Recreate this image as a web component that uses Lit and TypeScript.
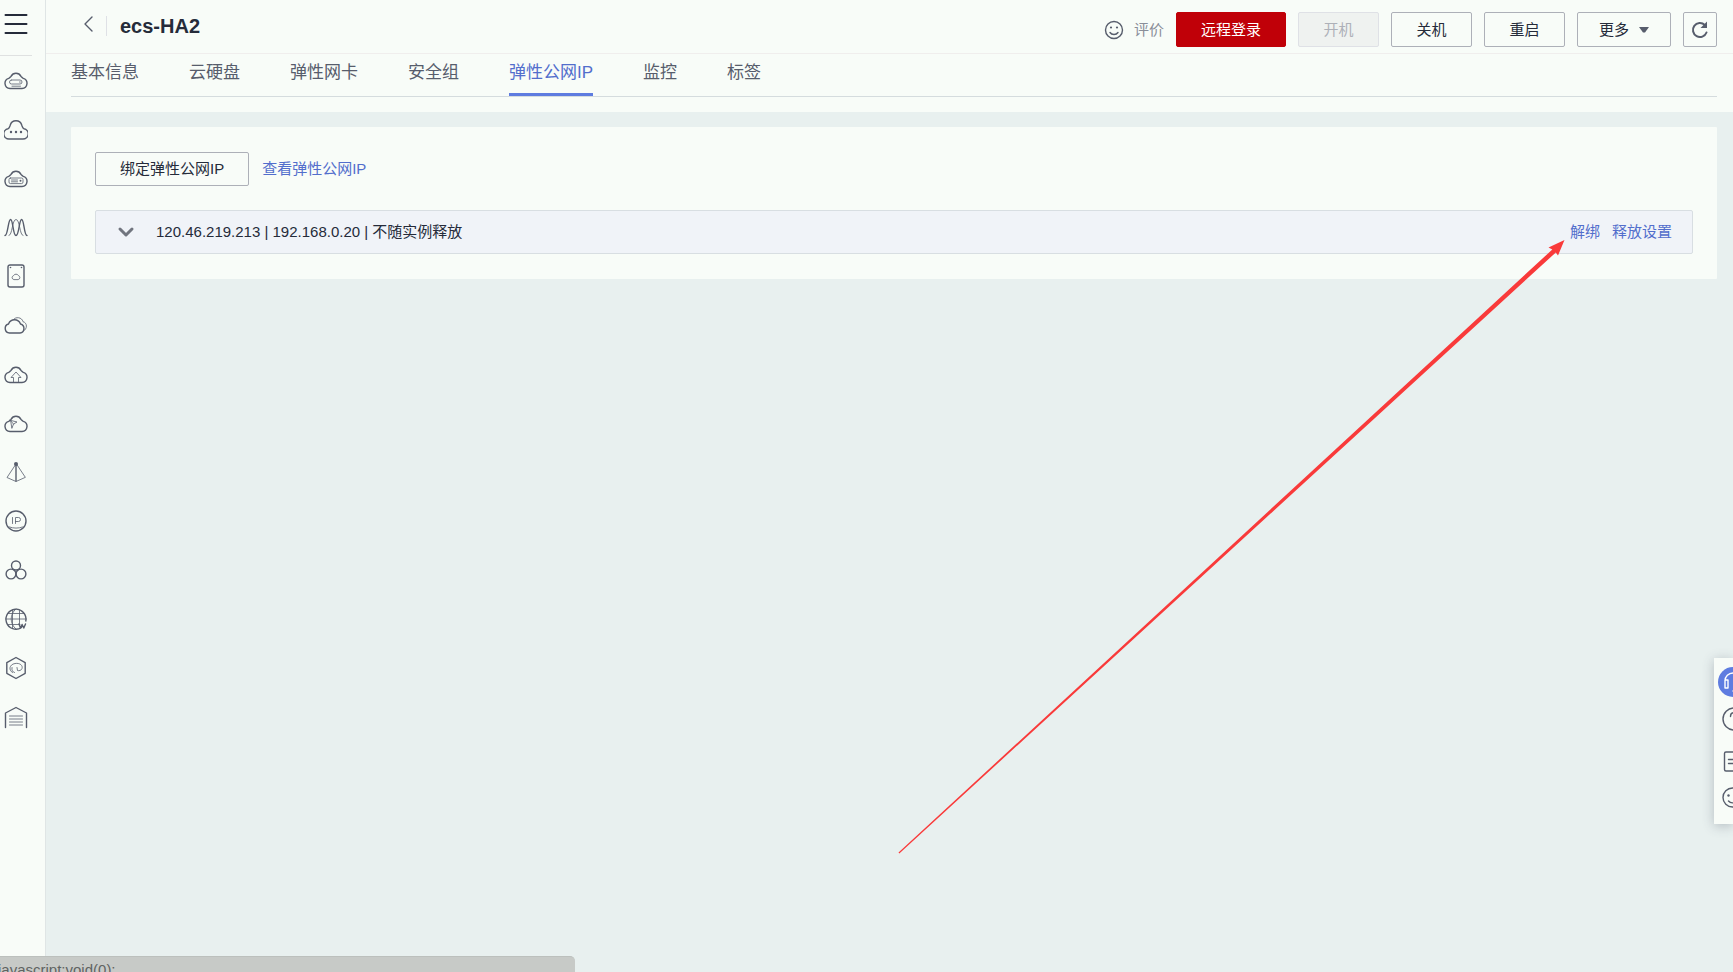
import { LitElement, html, css, svg } from "lit";
import { customElement, state } from "lit/decorators.js";

const cloud = "M6 20.5a5.2 5.2 0 0 1-1.2-10.2C5.8 9.6 6.500 9.300 7 8.400a5.600 5.600 0 0 1 10 0c.5.9 1.200 1.200 2.200 1.900A5.200 5.200 0 0 1 18 20.500z";

const services = [
  { name: "弹性云服务器", art: svg`<path d=${cloud}/><path class="thin" d="M7.500 12h8.500a1.500 1.500 0 0 1 0 4h-8.500a1.500 1.500 0 0 1 0-4M8 18.200h8.500M15.500 14h.8"/>` },
  { name: "云容器引擎", art: svg`<path d="M5 22a5.200 5.200 0 0 1-1-10.300C5.500 11.300 5.500 9.800 6.200 8.200a6 6 0 0 1 11.600 0c.7 1.600.7 3.100 2.200 3.500A5.200 5.200 0 0 1 19 22z"/><g class="dot"><circle cx="7" cy="15" r="1.200"/><circle cx="12" cy="15" r="1.200"/><circle cx="17" cy="15" r="1.200"/></g>` },
  { name: "裸金属服务器", art: svg`<path d=${cloud}/><rect class="thin" x="5" y="12" width="14" height="5.600" rx="1.500"/><path class="thin" d="M7.500 14h6M7.500 15.800h6"/><circle class="dot" cx="16.500" cy="14.800" r="1"/>` },
  { name: "弹性伸缩", art: svg`<path d="M1 20.500c3 0 3-16 5.600-16s2.200 16 5.400 16 3-16 5.600-16 2.400 16 5.400 16"/><path class="thin" d="M5 20.500c3.500 0 3-16 7-16s3.500 16 7 16"/>` },
  { name: "专属主机", art: svg`<rect x="4" y="1" width="16" height="22" rx="2"/><path class="thin" d="M9.500 15.500a2 2 0 0 1 0-3.800 2.800 2.800 0 0 1 5 0 2 2 0 0 1 0 3.800z"/><circle class="dot" cx="6.500" cy="3.500" r=".8"/><circle class="dot" cx="17.500" cy="3.500" r=".8"/>` },
  { name: "镜像服务", art: svg`<path d="M5.500 20a4.600 4.600 0 0 1-1-9C5.500 8.500 7.500 6.800 10.500 6.800s5 1.700 6 4.200a4.600 4.600 0 0 1-.5 9z"/><path class="thin" d="M9.500 6.500c2-3 8.500-2.500 9.500 2.200 4.500 1 4.500 7.500.5 9.200"/>` },
  { name: "云备份", art: svg`<path d=${cloud}/><path class="thin" d="M9.500 20v-4.500H7L12 10l5 5.500h-2.500V20"/>` },
  { name: "云服务", art: svg`<path d=${cloud}/><path class="thin" d="M7 9.500l6 1.500-3.500 2-1.500 4zM9.500 13L6 9"/>` },
  { name: "弹性负载均衡", art: svg`<circle class="dot" cx="12" cy="4" r="2"/><path d="M12 4v17"/><path class="thin" d="M12 4L3 17.500l9 4 9-4z"/>` },
  { name: "弹性公网IP", art: svg`<circle cx="12" cy="12" r="10"/><path class="thin" d="M8.500 8.500v6M11.500 14.500v-6h3a2 2 0 0 1 0 4h-3M5.500 18c4 1.500 9 1.500 13 0"/>` },
  { name: "虚拟私有云", art: svg`<circle cx="12" cy="7.500" r="4.500"/><circle cx="7" cy="16" r="4.900"/><circle cx="17" cy="16" r="4.900"/>` },
  { name: "内容分发网络", art: svg`<path d="M17.500 20.500A10 10 0 1 1 21.800 14"/><path class="thin" d="M2 12h20M4 6.500h16M4 17.500h12M8.500 3v18M15.500 3v14M12 2C5.500 7 5.500 17 12 22"/><path d="M15 17l1.500 4 1.600-3.500L19.800 21 21.500 17"/>` },
  { name: "云专线", art: svg`<path d="M12 1.500l9.200 5.200v10.600L12 22.500l-9.200-5.200V6.700z"/><path class="thin" d="M8.500 16.500c-4-2-3.500-8 2.500-9 5-.8 8 2 7 5-.6 2-3 2.500-4.500 2l-.5-3M8 11.500c-.5 3 .5 4.500 2.500 5"/>` },
  { name: "仓库", art: svg`<path d="M1.500 22.500V8L12 2.500 22.500 8v14.500"/><path class="thin" d="M5.500 11h13M5.500 14h13M5.500 17h13M5.500 20h13"/>` },
];

const tabs = ["基本信息", "云硬盘", "弹性网卡", "安全组", "弹性公网IP", "监控", "标签"];

@customElement("app-root")
export class AppRoot extends LitElement {
  @state() private active = 4;

  static styles = css`
    :host {
      display: block;
      min-height: 100vh;
      background: #e8f0ef;
      color: #252b3a;
      font: 15px/20px "Liberation Sans", "Noto Sans CJK SC", sans-serif;
    }
    * { box-sizing: border-box; }
    svg {
      display: block;
      fill: none;
      stroke: #575d6c;
      stroke-width: 1.4;
      stroke-linecap: round;
      stroke-linejoin: round;
    }
    .thin { stroke-width: 0.8; }
    .dot { fill: #575d6c; stroke: none; }
    a { color: #526ecc; text-decoration: none; }
    button {
      display: flex;
      align-items: center;
      justify-content: center;
      padding: 0;
      border: 0;
      background: none;
      color: inherit;
      font: inherit;
      white-space: nowrap;
    }
    .shell { display: flex; min-height: 100vh; }
    .side {
      flex: none;
      width: 46px;
      background: #f8fcf8;
      border-right: 1px solid #dfe5e5;
    }
    .burger { width: 32px; height: 56px; padding: 0 0 8px; border-bottom: 1px solid #dfe1e1; }
    .burger svg { stroke: #252b3a; stroke-width: 2; }
    .services { list-style: none; margin: 0; padding: 0; }
    .services a { display: flex; justify-content: center; width: 32px; height: 49px; padding-top: 12px; }
    .main { flex: 1; min-width: 0; }
    .top { background: #f8fcf8; padding-bottom: 15px; }
    .bar {
      display: flex;
      align-items: center;
      height: 54px;
      padding: 6px 16px 0 36px;
      border-bottom: 1px solid #f0eeed;
    }
    .back { width: 12px; height: 24px; margin-bottom: 12px; }
    .title {
      margin: 0 auto 8px 12px;
      padding-left: 13px;
      border-left: 1px solid #dfe1e6;
      font-size: 20px;
      line-height: 20px;
    }
    .actions { display: flex; align-items: center; gap: 12px; }
    .rate { gap: 10px; color: #8a8e99; }
    .btn {
      height: 35px;
      min-width: 81px;
      padding: 0 24px;
      border: 1px solid #adb0b8;
      border-radius: 2px;
      background: #f8fcf8;
    }
    .btn.primary { background: #c00008; border-color: #c00008; color: #fff; }
    .btn:disabled { background: #eff2f0; border-color: #dfe1e6; color: #adb0b8; }
    .btn.menu { gap: 10px; padding: 0 21px; }
    .btn.icon { min-width: 34px; padding: 0; }
    .tabs {
      display: flex;
      gap: 50px;
      height: 43px;
      margin: 0 16px 0 25px;
      border-bottom: 1px solid #d5dcde;
    }
    .tab {
      height: 42px;
      padding-bottom: 1px;
      border-bottom: 3px solid transparent;
      color: #575d6c;
      font-size: 17px;
    }
    .tab.on { color: #526ecc; border-color: #5e7ce0; }
    .card {
      margin: 15px 16px 0 25px;
      padding: 25px 24px;
      background: #f8fcf8;
      border-radius: 1px;
    }
    .tools { display: flex; align-items: center; gap: 13px; margin-bottom: 24px; }
    .tools .btn { height: 34px; }
    .row {
      display: flex;
      align-items: center;
      height: 44px;
      padding: 0 20px;
      border: 1px solid #d8dee2;
      border-radius: 2px;
      background: #f0f3f8;
    }
    .fold { width: 20px; height: 24px; margin-right: 20px; }
    .fold svg { stroke: #71757f; stroke-width: 3; }
    .links { display: flex; gap: 12px; margin-left: auto; }
    .dock {
      position: fixed;
      right: 0;
      top: 658px;
      width: 19px;
      height: 166px;
      overflow: hidden;
      background: #f8fcf8;
    }
    .shadow {
      position: fixed;
      right: 0;
      top: 658px;
      width: 19px;
      height: 166px;
      box-shadow: 0 2px 12px rgba(60, 70, 90, 0.3);
    }
    .status {
      position: fixed;
      left: 0;
      bottom: 0;
      width: 575px;
      height: 16px;
      padding-top: 3px;
      overflow: hidden;
      border-top: 1px solid #bcc0bd;
      border-radius: 0 5px 0 0;
      background: #c7cac7;
      color: #5f6362;
      text-indent: -2px;
      white-space: nowrap;
    }
    .arrow { position: absolute; top: 238px; right: 166px; pointer-events: none; }
  `;

  render() {
    return html`
      <div class="shell">
        <nav class="side" aria-label="服务列表">
          <button class="burger" aria-label="菜单">
            <svg width="24" height="24" viewBox="0 0 24 24"><path d="M1.500 3h21M1.500 12h21M1.500 21h21"/></svg>
          </button>
          <ul class="services">
            ${services.map((s) => html`<li><a href="#" aria-label=${s.name}>
              <svg width="24" height="24" viewBox="0 0 24 24">${s.art}</svg></a></li>`)}
          </ul>
        </nav>
        <div class="main">
          <header class="top">
            <div class="bar">
              <button class="back" aria-label="返回">
                <svg width="12" height="18" viewBox="0 0 12 18"><path d="M10 2L3 9l7 7"/></svg>
              </button>
              <h1 class="title">ecs-HA2</h1>
              <div class="actions">
                <button class="rate">
                  <svg width="20" height="20" viewBox="0 0 20 20"><circle cx="10" cy="10" r="8.500"/><path d="M6 12.500c1.800 2.600 6.200 2.600 8 0"/><circle class="dot" cx="7" cy="7.500" r="1.100"/><circle class="dot" cx="13" cy="7.500" r="1.100"/></svg>
                  评价
                </button>
                <button class="btn primary">远程登录</button>
                <button class="btn" disabled>开机</button>
                <button class="btn">关机</button>
                <button class="btn">重启</button>
                <button class="btn menu">更多
                  <svg width="10" height="6" viewBox="0 0 10 6"><path class="dot" d="M0 0h10L6 5.500H4z"/></svg>
                </button>
                <button class="btn icon" aria-label="刷新">
                  <svg width="18" height="20" viewBox="0 0 18 20"><path stroke-width="2" d="M15.500 12.500A7 7 0 1 1 13.800 5"/><path class="dot" d="M16 1.500V8H9.500z"/></svg>
                </button>
              </div>
            </div>
            <div class="tabs" role="tablist">
              ${tabs.map((t, i) => html`<button role="tab" aria-selected=${i === this.active}
                class="tab ${i === this.active ? "on" : ""}" @click=${() => (this.active = i)}>${t}</button>`)}
            </div>
          </header>
          <section class="card">
            <div class="tools">
              <button class="btn">绑定弹性公网IP</button>
              <a href="#">查看弹性公网IP</a>
            </div>
            <div class="row">
              <button class="fold" aria-label="展开">
                <svg width="18" height="12" viewBox="0 0 18 12"><path d="M3 3l6 6 6-6"/></svg>
              </button>
              <span>120.46.219.213 | 192.168.0.20 | 不随实例释放</span>
              <div class="links"><a href="#">解绑</a><a href="#">释放设置</a></div>
            </div>
          </section>
        </div>
      </div>
      <svg class="arrow" width="670" height="618" viewBox="0 0 670 618">
        <path fill="#f93a3a" stroke="none" d="M1.500 614.500L655.300 11.500l-3.800-2L667.500 2l-6.500 15.500-2.200-3L2.300 615.500z"/>
      </svg>
      <div class="shadow"></div>
      <aside class="dock">
        <svg width="38" height="166" viewBox="0 0 38 166">
          <circle cx="19" cy="24" r="15" fill="#5e7ce0" stroke="none"/>
          <g stroke="#fff"><path d="M11 23a8 8 0 0 1 16 0M11 22h3v8h-3zM24 22h3v8h-3zM27 30c-1 3-4 3-8 3"/></g>
          <circle cx="20" cy="61" r="11"/><path d="M16.500 58.500c0-5 7-5 7 0 0 3-3.500 2.500-3.500 5.500M20 67v.5"/>
          <rect x="10.500" y="94" width="17" height="19" rx="1.500"/><path d="M14.500 101.500h9M14.500 105.500h9"/>
          <circle cx="18.500" cy="139.500" r="9.500"/><path d="M14.500 143c2 2.500 6 2.500 8 0"/><circle class="dot" cx="14.500" cy="137.500" r="1.200"/>
        </svg>
      </aside>
      <div class="status">javascript:void(0);</div>
    `;
  }
}
